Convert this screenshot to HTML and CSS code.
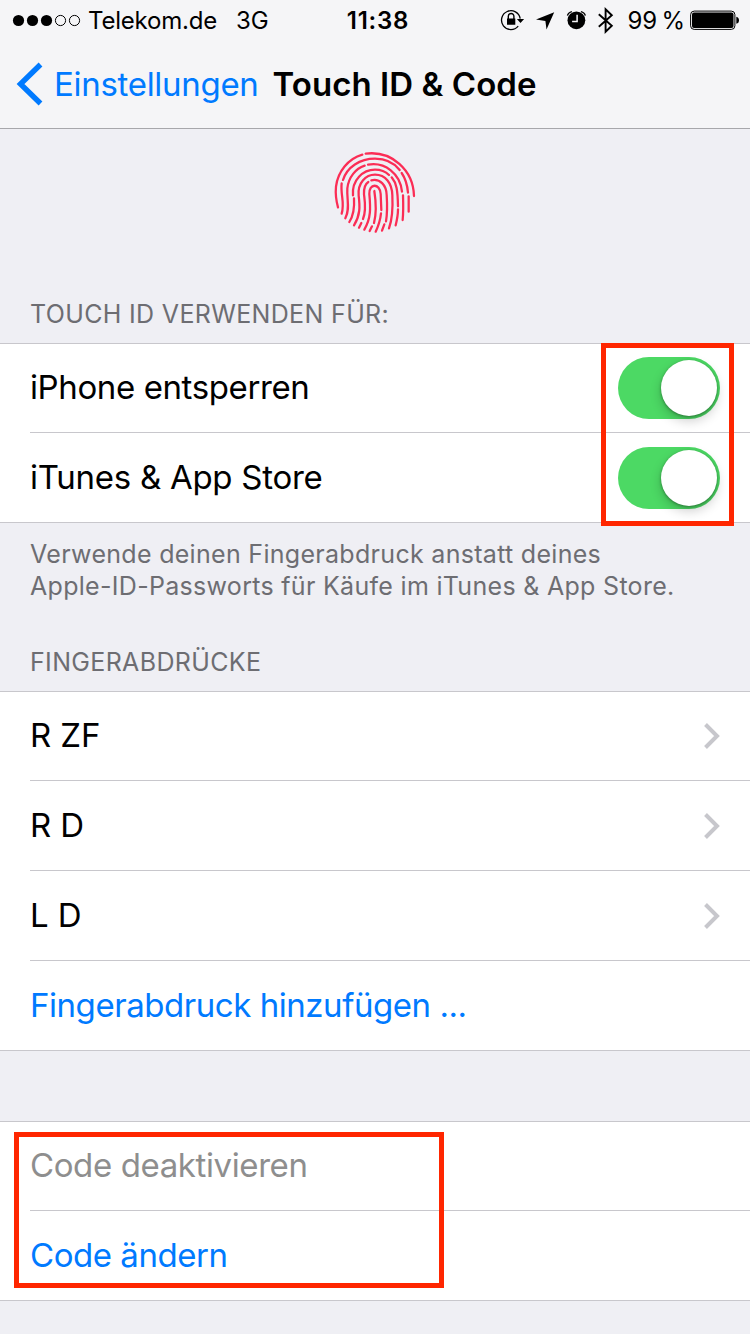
FILE: index.html
```html
<!DOCTYPE html>
<html lang="de">
<head>
<meta charset="utf-8">
<title>Touch ID &amp; Code</title>
<link rel="stylesheet" href="styles.css">
</head>
<body>
<div class="screen">
  <header class="top">
    <div class="status">
      <div class="status-left">
        <svg class="signal" width="70" height="14" viewBox="0 0 70 14">
          <circle cx="6.5" cy="7.5" r="5.6"/><circle cx="20.5" cy="7.5" r="5.6"/><circle cx="34.5" cy="7.5" r="5.6"/>
          <g fill="none" stroke="#000" stroke-width="1"><circle cx="48.5" cy="7.5" r="5.1"/><circle cx="62.5" cy="7.5" r="5.1"/></g>
        </svg>
        <span class="carrier">Telekom.de</span>
        <span class="network">3G</span>
      </div>
      <div class="clock">11:38</div>
      <div class="status-right">
        <svg class="status-icons" width="117" height="32" viewBox="0 0 117 32">
          <g fill="none" stroke="#000" stroke-width="1.3"><path d="M18.2 22.1A9.4 9.4 0 1 1 20.2 14.6"/><path d="M8.3 15V12.3a2.8 2.8 0 0 1 5.6 0V15" stroke-width="1.4"/></g>
          <path d="M7 14.4h8.3v6.3H7zM16.9 15h7.2l-3.6 3.9z"/>
          <path d="M54.2 8.2L46.5 25.6L45.4 16.9L36 15.6z"/>
          <circle cx="76.4" cy="16.3" r="8.9"/>
          <path d="M77.1 10.8v6.6h-5" fill="none" stroke="#f5f5f7" stroke-width="1.5"/>
          <path d="M67.5 11.7q.6-3.2 4.4-4.1M85.3 11.7q-.6-3.2-4.4-4.1" fill="none" stroke="#000" stroke-width="1.4"/>
          <path d="M98.8 10.3L111.8 21.8L105.6 27.8V5.2L111.8 11.2L98.8 22.7" fill="none" stroke="#000" stroke-width="1.9"/>
        </svg>
        <span class="percent">99 %</span>
        <svg class="battery" width="50" height="20" viewBox="0 0 50 20">
          <rect x=".6" y="1.1" width="44.3" height="18.3" rx="3.6" fill="none" stroke="#000" stroke-width="1"/>
          <rect x="2" y="2.5" width="41.5" height="15.5" rx="2"/>
          <path d="M46.3 6.8q2.7.5 2.7 3.5t-2.7 3.5z"/>
        </svg>
      </div>
    </div>
    <nav class="nav">
      <svg class="back" width="28" height="44" viewBox="0 0 28 44"><path d="M25.5 2.5L5.5 22L25.5 41.5" fill="none" stroke="#007aff" stroke-width="5.4"/></svg>
      <a class="back-label">Einstellungen</a>
      <h1 class="title">Touch ID &amp; Code</h1>
    </nav>
  </header>

  <div class="hero">
    <svg class="fingerprint" width="100" height="95" viewBox="0 0 300 285">
      <path d="M39 187C33 165 31 145 33 125C38 80 70 41 112 29M122 26C200 16 265 75 267 153"/>
      <path d="M54 105C66 66 105 41 150 41C180 41 207 53 224 75M230 84C241 100 247 120 249 143M251 154V200M50 115C46 150 60 172 50 206"/>
      <path d="M61 220C76 190 65 165 67 130C71 96 92 71 119 62M129 59C180 50 226 86 231 140M234 151C235 180 235 205 233 225"/>
      <path d="M84 151C80 105 114 74 150 74C168 74 182 80 192 90M200 97C215 115 218 135 219 184M219 193C219 210 216 225 212 241M87 160C89 190 85 212 73 231"/>
      <path d="M87 241C106 210 105 185 101 152C97 115 122 89 150 89C182 89 201 115 202 150C204 190 202 222 192 250"/>
      <path d="M114 222C125 195 119 165 117 148C116 130 121 117 130 111M139 106C165 100 184 120 185 150C187 180 187 205 183 229M178 238L171 257M109 234L102 248"/>
      <path d="M118 254C138 220 137 190 133 147C131 114 165 114 167 147L169 195M168 205C166 225 160 243 152 260"/>
      <path d="M148 138C153 170 155 203 147 234M141 244L134 258"/>
    </svg>
  </div>

  <h2 class="caption">TOUCH ID VERWENDEN FÜR:</h2>
  <section class="group">
    <div class="row first"><span class="label">iPhone entsperren</span><span class="switch"></span></div>
    <div class="row last"><span class="label store">iTunes &amp; App Store</span><span class="switch"></span></div>
    <div class="mark mark-switches"></div>
  </section>
  <p class="note">Verwende deinen Fingerabdruck anstatt deines<br>Apple-ID-Passworts für Käufe im iTunes &amp; App Store.</p>

  <h2 class="caption">FINGERABDRÜCKE</h2>
  <section class="group">
    <div class="row first"><span class="label short">R ZF</span><svg class="chevron" width="18" height="28" viewBox="0 0 18 28"><path d="M3.5 2.5L15 14L3.5 25.5"/></svg></div>
    <div class="row"><span class="label short">R D</span><svg class="chevron" width="18" height="28" viewBox="0 0 18 28"><path d="M3.5 2.5L15 14L3.5 25.5"/></svg></div>
    <div class="row"><span class="label short">L D</span><svg class="chevron" width="18" height="28" viewBox="0 0 18 28"><path d="M3.5 2.5L15 14L3.5 25.5"/></svg></div>
    <div class="row last link"><span class="label add">Fingerabdruck hinzufügen ...</span></div>
  </section>

  <section class="group group-code">
    <div class="row first disabled"><span class="label">Code deaktivieren</span></div>
    <div class="row last link"><span class="label add">Code ändern</span></div>
    <div class="mark mark-code"></div>
  </section>
</div>
</body>
</html>
```

FILE: styles.css
```css
* { box-sizing: border-box; }
body { margin: 0; background: #efeff4; color: #000; font-family: Inter, "Liberation Sans", sans-serif; }
.screen { width: 750px; height: 1334px; overflow: hidden; background: #efeff4; }
svg { display: block; flex: none; }
h1, h2, p { margin: 0; font-weight: 400; }
span, a, h1, .clock { white-space: nowrap; }

.top { height: 129px; background: #f5f5f7; border-bottom: 1px solid #a7a7ab; }
.status { display: grid; grid-template-columns: 1fr auto 1fr; align-items: center; height: 40px; padding: 0 10px 0 12px; font-size: 24px; }
.status-left, .status-right { display: flex; align-items: center; }
.status-right { justify-content: flex-end; }
.carrier { margin-left: 6px; letter-spacing: -.2px; }
.network { margin-left: 19px; letter-spacing: -.2px; }
.clock { padding-left: 4px; font-weight: 600; letter-spacing: .8px; }
.percent { margin: 0 5px 0 10px; word-spacing: -2.5px; }
.nav { display: flex; align-items: center; height: 88px; padding-left: 15px; font-size: 33px; }
.back-label { margin-left: 11px; color: #007aff; letter-spacing: -.3px; }
.title { margin-left: 14px; font-size: 33px; font-weight: 600; letter-spacing: .05px; }

.hero { display: flex; justify-content: center; height: 151px; padding-top: 16px; }
.fingerprint { fill: none; stroke: #fb2d55; stroke-width: 6.8; stroke-linecap: round; }

.caption { height: 63px; padding: 18px 0 0 30px; font-size: 25px; line-height: 32px; color: #6d6d72; letter-spacing: .34px; }
.group { position: relative; background: #fff; border: solid #c8c7cc; border-width: 1px 0; }
.row { display: flex; align-items: center; justify-content: space-between; height: 90px; margin-left: 30px; padding: 1px 30px 0 0; border-bottom: 1px solid #c8c7cc; font-size: 33px; }
.row.first { height: 89px; padding-top: 0; }
.row.last { height: 89px; border-bottom: 0; }
.label { padding-bottom: 2px; letter-spacing: -.39px; }
.label.store { letter-spacing: -.27px; }
.label.short { letter-spacing: -.1px; }
.label.add { letter-spacing: -.45px; }
.link { color: #007aff; }
.disabled { color: #8e8e8e; }
.chevron { fill: none; stroke: #c7c7cc; stroke-width: 4; }

.switch { width: 102px; height: 62px; padding: 3px; border-radius: 31px; background: #4cd964; }
.switch::after { content: ""; display: block; width: 56px; height: 56px; margin-left: 40px; border-radius: 50%; background: #fff; box-shadow: 0 5px 12px rgba(0, 0, 0, .2), 0 1px 3px rgba(0, 0, 0, .35); }

.note { height: 105px; padding: 15px 0 0 30px; font-size: 25px; line-height: 32px; color: #6d6d72; letter-spacing: .3px; }
.group-code { margin-top: 70px; }

.mark { position: absolute; border: 5px solid #ff2600; }
.mark-switches { left: 601px; top: -1px; width: 133px; height: 183px; }
.mark-code { left: 14px; top: 10px; width: 430px; height: 156px; }
```
